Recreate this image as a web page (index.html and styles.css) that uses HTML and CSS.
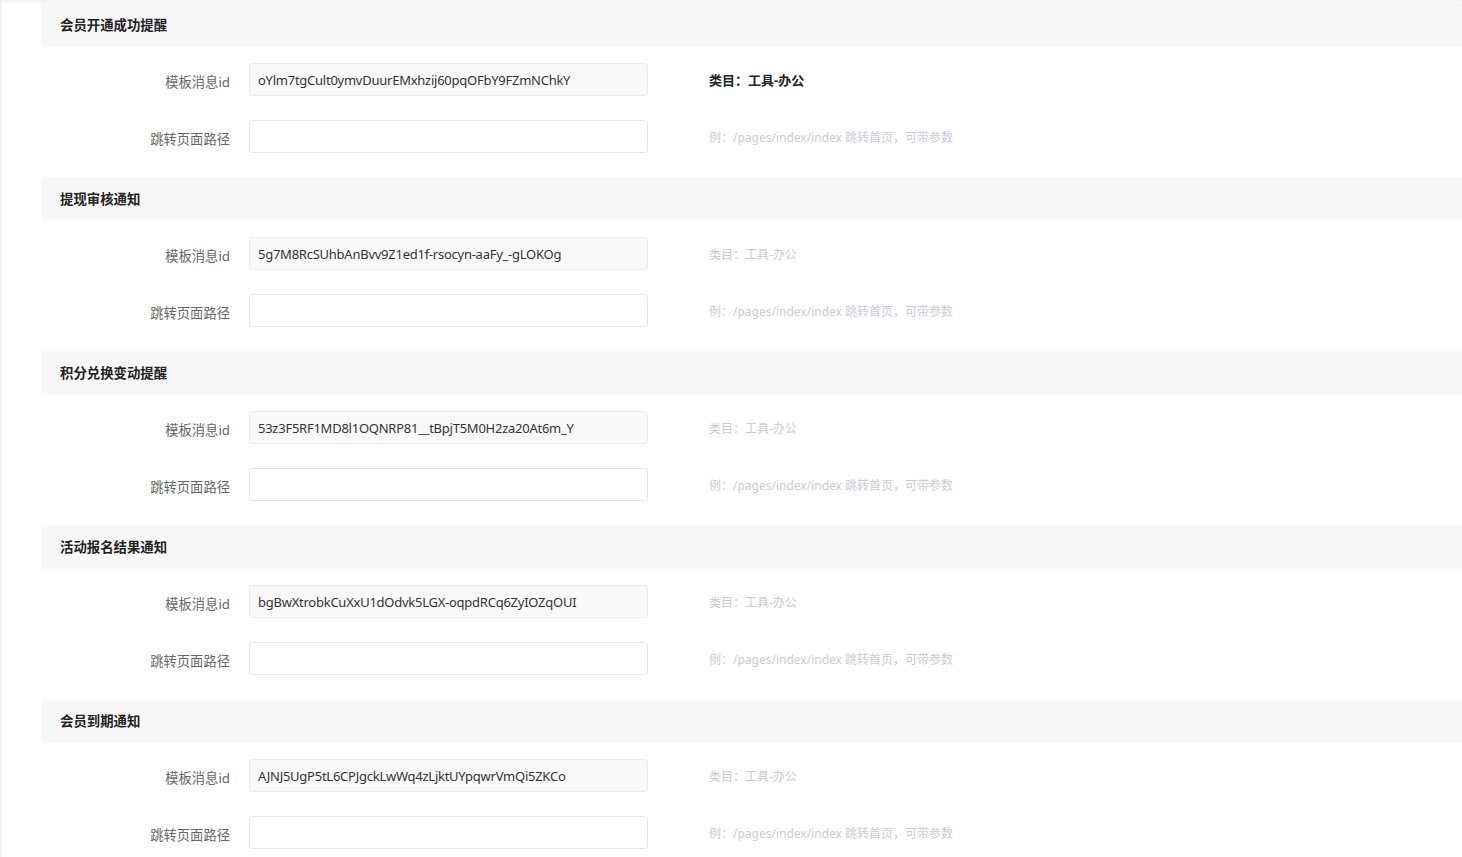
FILE: index.html
```html
<!DOCTYPE html>
<html lang="zh-CN">
<head>
<meta charset="utf-8">
<title>模板消息</title>
<link rel="stylesheet" href="styles.css">
</head>
<body>
<div class="page">
  <div class="topband"></div>
  <div class="content">
    <section class="group">
      <div class="group-head">会员开通成功提醒</div>
      <div class="row">
        <label class="label">模板消息id</label>
        <div class="input readonly">oYlm7tgCult0ymvDuurEMxhzij60pqOFbY9FZmNChkY</div>
        <div class="tip strong">类目：工具-办公</div>
      </div>
      <div class="row">
        <label class="label">跳转页面路径</label>
        <div class="input"></div>
        <div class="tip">例：/pages/index/index 跳转首页，可带参数</div>
      </div>
    </section>
    <section class="group">
      <div class="group-head">提现审核通知</div>
      <div class="row">
        <label class="label">模板消息id</label>
        <div class="input readonly">5g7M8RcSUhbAnBvv9Z1ed1f-rsocyn-aaFy_-gLOKOg</div>
        <div class="tip">类目：工具-办公</div>
      </div>
      <div class="row">
        <label class="label">跳转页面路径</label>
        <div class="input"></div>
        <div class="tip">例：/pages/index/index 跳转首页，可带参数</div>
      </div>
    </section>
    <section class="group">
      <div class="group-head">积分兑换变动提醒</div>
      <div class="row">
        <label class="label">模板消息id</label>
        <div class="input readonly">53z3F5RF1MD8l1OQNRP81__tBpjT5M0H2za20At6m_Y</div>
        <div class="tip">类目：工具-办公</div>
      </div>
      <div class="row">
        <label class="label">跳转页面路径</label>
        <div class="input"></div>
        <div class="tip">例：/pages/index/index 跳转首页，可带参数</div>
      </div>
    </section>
    <section class="group">
      <div class="group-head">活动报名结果通知</div>
      <div class="row">
        <label class="label">模板消息id</label>
        <div class="input readonly">bgBwXtrobkCuXxU1dOdvk5LGX-oqpdRCq6ZyIOZqOUI</div>
        <div class="tip">类目：工具-办公</div>
      </div>
      <div class="row">
        <label class="label">跳转页面路径</label>
        <div class="input"></div>
        <div class="tip">例：/pages/index/index 跳转首页，可带参数</div>
      </div>
    </section>
    <section class="group">
      <div class="group-head">会员到期通知</div>
      <div class="row">
        <label class="label">模板消息id</label>
        <div class="input readonly">AJNJ5UgP5tL6CPJgckLwWq4zLjktUYpqwrVmQi5ZKCo</div>
        <div class="tip">类目：工具-办公</div>
      </div>
      <div class="row">
        <label class="label">跳转页面路径</label>
        <div class="input"></div>
        <div class="tip">例：/pages/index/index 跳转首页，可带参数</div>
      </div>
    </section>
  </div>
</div>
</body>
</html>
```
FILE: styles.css
```css
html, body {
  margin: 0;
  padding: 0;
  background: #ffffff;
  font-family: "Noto Sans", "Noto Sans CJK SC", sans-serif;
  font-size: 13px;
  color: #333333;
}

.page {
  border-left: 2px solid #f2f3f7;
  min-height: 857px;
  box-sizing: border-box;
}

.topband {
  height: 3px;
  background: linear-gradient(#f3f3f3, #fbfbfb);
}

.content {
  padding-left: 39px;
}

.group {
  padding-bottom: 24px;
}

.group-head {
  height: 44px;
  line-height: 44px;
  background: #f8f8f8;
  padding-left: 19px;
  font-weight: bold;
  font-size: 13.4px;
  color: #222222;
}

.row {
  display: flex;
  align-items: center;
  margin-top: 16px;
}

.row + .row {
  margin-top: 24px;
}

.label {
  width: 189px;
  text-align: right;
  color: #666666;
  font-size: 13.3px;
  padding-top: 4px;
}

.input {
  margin-left: 19px;
  width: 399px;
  height: 33px;
  box-sizing: border-box;
  border: 1px solid #e6e6e6;
  border-radius: 3px;
  background: #ffffff;
  padding: 2px 0 0 8px;
  line-height: 29px;
  font-size: 13px;
  letter-spacing: -0.25px;
  color: #333333;
  white-space: nowrap;
  overflow: hidden;
}

.input.readonly {
  background: #f9f9f9;
  border-color: #ececec;
}

.tip {
  margin-left: 61px;
  font-size: 12px;
  color: #c8cbd6;
  padding-top: 1px;
}

.tip.strong {
  font-size: 13px;
  font-weight: bold;
  color: #222222;
  padding-top: 0;
}
```
